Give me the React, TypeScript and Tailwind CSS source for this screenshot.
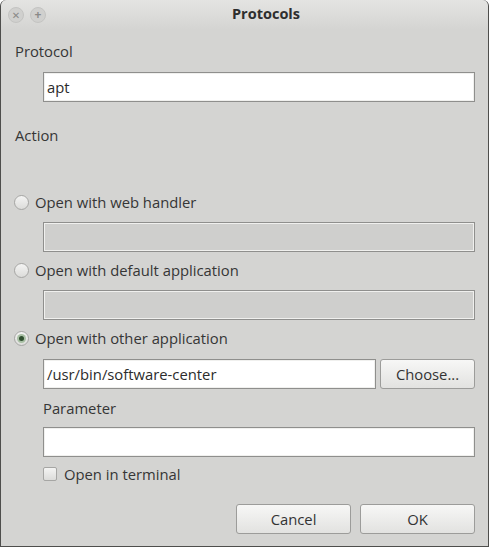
import type { ReactNode } from 'react'

function Radio({ checked, label }: { checked?: boolean; label: string }) {
	return (
		<div className="flex items-center h-[20px]">
			<div className="ml-[13px] w-[15px] h-[15px] rounded-full border border-[#a6a6a4] bg-gradient-to-b from-[#f4f4f3] to-[#dcdcda] flex items-center justify-center">
				{checked && (
					<div className="w-[9px] h-[9px] rounded-full bg-[#a9c0a5] flex items-center justify-center">
						<div className="w-[5px] h-[5px] rounded-full bg-[#2f4f2f]" />
					</div>
				)}
			</div>
			<span className="ml-[6px]">{label}</span>
		</div>
	)
}

function Field({ value, disabled, className }: { value?: string; disabled?: boolean; className?: string }) {
	return (
		<div
			className={`h-[30px] border border-[#8f8f8d] shadow-[inset_0_0_0_1px_#f0f0ee] flex items-center px-[3px] text-[#2c2c2c] ${
				disabled ? 'bg-[#cfcfcd]' : 'bg-white'
			} ${className ?? ''}`}
		>
			{value}
		</div>
	)
}

function Button({ children, className }: { children: ReactNode; className?: string }) {
	return (
		<div
			className={`h-[30px] rounded-[3px] border border-[#9c9c9a] bg-gradient-to-b from-[#f7f7f6] to-[#e2e2e0] flex items-center justify-center text-[#333] ${
				className ?? ''
			}`}
		>
			{children}
		</div>
	)
}

export default function App() {
	return (
		<div
			className="w-[489px] h-[547px] bg-[#d4d4d2] border border-[#4e4e4c] border-t-0 rounded-t-[6px] overflow-hidden flex flex-col text-[14.8px] text-[#363636]"
			style={{ fontFamily: '"Open Sans", "DejaVu Sans", sans-serif' }}
		>
			<div className="h-[30px] shrink-0 bg-gradient-to-b from-[#e4e4e2] to-[#d4d4d2] flex items-center relative rounded-t-[6px]">
				<div className="ml-[7px] w-[16px] h-[16px] rounded-full bg-[#d0d0ce] border border-[#c4c4c2] flex items-center justify-center text-[10px] text-[#8a8a88] leading-none">
					✕
				</div>
				<div className="ml-[6px] w-[16px] h-[16px] rounded-full bg-[#d0d0ce] border border-[#c4c4c2] flex items-center justify-center text-[12px] text-[#8a8a88] leading-none font-bold">
					+
				</div>
				<div className="absolute left-0 right-0 top-0 h-[28px] flex items-center justify-center pl-[43px] font-bold text-[14.5px] text-[#2e2e2e]">
					Protocols
				</div>
			</div>

			<div className="flex flex-col pr-[13px]">
				<div className="mt-[11px] h-[20px] leading-[20px] pl-[14px]">Protocol</div>
				<Field value="apt" className="mt-[11px] ml-[42px]" />

				<div className="mt-[23px] h-[20px] leading-[20px] pl-[14px]">Action</div>

				<div className="mt-[47px]">
					<Radio label="Open with web handler" />
				</div>
				<Field disabled className="mt-[10px] ml-[42px]" />

				<div className="mt-[8px]">
					<Radio label="Open with default application" />
				</div>
				<Field disabled className="mt-[10px] ml-[42px]" />

				<div className="mt-[8px]">
					<Radio checked label="Open with other application" />
				</div>
				<div className="mt-[11px] ml-[42px] flex gap-[4px]">
					<Field value="/usr/bin/software-center" className="flex-1" />
					<Button className="w-[95px]">Choose...</Button>
				</div>

				<div className="mt-[9px] h-[20px] leading-[20px] pl-[42px]">Parameter</div>
				<Field className="mt-[9px] ml-[42px]" />

				<div className="mt-[7px] ml-[42px] h-[20px] flex items-center">
					<div className="w-[14px] h-[14px] rounded-[2px] border border-[#a6a6a4] bg-gradient-to-b from-[#f4f4f3] to-[#dcdcda]" />
					<span className="ml-[7px]">Open in terminal</span>
				</div>

				<div className="mt-[20px] flex justify-end gap-[9px]">
					<Button className="w-[115px]">Cancel</Button>
					<Button className="w-[115px]">OK</Button>
				</div>
			</div>
		</div>
	)
}
